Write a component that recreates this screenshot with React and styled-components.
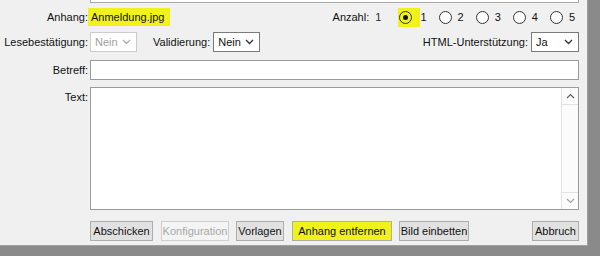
import React from "react";
import styled, { createGlobalStyle } from "styled-components";

const Global = createGlobalStyle`
  html, body { margin: 0; padding: 0; background: #f0f0f0; }
  body { font-family: "Liberation Sans", Arial, sans-serif; font-size: 11px; color: #111; }
`;

const Frame = styled.div`
  width: 600px;
  height: 256px;
  display: grid;
  grid-template-columns: 588px 12px;
  grid-template-rows: 246px 10px;
  background: #8a8a8a;
  overflow: hidden;
`;

const Dialog = styled.div`
  background: #f0f0f0;
  display: flex;
  flex-direction: column;
  padding-right: 8px;
  border-right: 1px solid #a0a0a0;
  border-bottom: 1px solid #a0a0a0;
`;

const TopBox = styled.div`
  margin-left: 90px;
  height: 2px;
  border: 1px solid #a9a9a9;
  border-top: none;
  background: #fff;
`;

const Row = styled.div`
  display: flex;
  align-items: center;
  height: ${(p) => p.h || 20}px;
  margin-top: ${(p) => p.mt || 0}px;
`;

const Label = styled.span`
  width: 88px;
  flex: none;
  text-align: right;
  white-space: nowrap;
  margin-right: 2px;
  align-self: ${(p) => (p.top ? "flex-start" : "center")};
  padding-top: ${(p) => (p.top ? "4px" : "0")};
`;

const InlineLabel = styled.span`
  white-space: nowrap;
  margin-left: ${(p) => p.ml || 0}px;
  margin-right: 3px;
`;

const Highlight = styled.span`
  background: #f1f11c;
  padding: 3px 6px 3px 3px;
  margin-left: -2px;
`;

const RightGroup = styled.div`
  margin-left: auto;
  display: flex;
  align-items: center;
`;

const Count = styled.span`
  margin-left: 6px;
  margin-right: 18px;
  color: #2a2a3a;
`;

const Radios = styled.div`
  display: flex;
  align-items: center;
  gap: 12px;
  margin-right: 4px;
`;

const RadioOption = styled.span`
  display: flex;
  align-items: center;
  gap: ${(p) => (p.checked ? 0 : 6)}px;
`;

const RadioMark = styled.span`
  display: flex;
  align-items: center;
  padding: ${(p) => (p.checked ? "3px 8px 3px 1px" : "0")};
  margin-left: ${(p) => (p.checked ? "-1px" : "0")};
  background: ${(p) => (p.checked ? "#f1f11c" : "transparent")};
`;

const Circle = styled.span`
  width: 11px;
  height: 11px;
  border-radius: 50%;
  border: 1px solid #333;
  background: ${(p) => (p.checked ? "transparent" : "#fff")};
  display: flex;
  align-items: center;
  justify-content: center;
  &::after {
    content: "";
    display: ${(p) => (p.checked ? "block" : "none")};
    width: 5px;
    height: 5px;
    border-radius: 50%;
    background: #111;
  }
`;

const SelectBox = styled.span`
  display: flex;
  align-items: center;
  justify-content: space-between;
  box-sizing: border-box;
  width: ${(p) => p.w}px;
  height: 20px;
  padding: 0 5px 0 4px;
  background: #fff;
  border: 1px solid ${(p) => (p.disabled ? "#cccccc" : "#7a7a7a")};
  color: ${(p) => (p.disabled ? "#a0a0a0" : "#111")};
  margin-left: ${(p) => p.ml || 0}px;
`;

const Chevron = ({ color }) => (
  <svg width="9" height="6" viewBox="0 0 9 6">
    <path d="M1 1 L4.5 4.5 L8 1" fill="none" stroke={color} strokeWidth="1.3" />
  </svg>
);

const Select = ({ value, w, disabled, ml }) => (
  <SelectBox w={w} disabled={disabled} ml={ml}>
    <span>{value}</span>
    <Chevron color={disabled ? "#b0b0b0" : "#333"} />
  </SelectBox>
);

const TextInput = styled.div`
  flex: 1;
  height: 20px;
  box-sizing: border-box;
  background: #fff;
  border: 1px solid #9a9a9a;
`;

const TextArea = styled.div`
  flex: 1;
  align-self: stretch;
  box-sizing: border-box;
  background: #fff;
  border: 1px solid #9a9a9a;
  display: flex;
  justify-content: flex-end;
`;

const ScrollBar = styled.div`
  width: 16px;
  display: flex;
  flex-direction: column;
  justify-content: space-between;
  background: #fbfbfb;
  border-left: 1px solid #e2e2e2;
`;

const ScrollBtn = styled.div`
  height: 16px;
  display: flex;
  align-items: center;
  justify-content: center;
  border-${(p) => (p.up ? "bottom" : "top")}: 1px solid #e2e2e2;
`;

const Buttons = styled.div`
  display: flex;
  align-items: center;
  margin-top: 11px;
  margin-left: 90px;
  height: 20px;
`;

const Button = styled.button`
  box-sizing: border-box;
  height: 20px;
  width: ${(p) => p.w}px;
  margin-left: ${(p) => (p.push ? "auto" : `${p.ml || 0}px`)};
  padding: 0;
  font: inherit;
  font-size: 11px;
  color: ${(p) => (p.disabled ? "#a8a8a8" : "#111")};
  background: ${(p) => (p.hl ? "#f1f11c" : p.disabled ? "#f4f4f4" : "#e1e1e1")};
  border: 1px solid ${(p) => (p.disabled ? "#cfcfcf" : "#adadad")};
  white-space: nowrap;
`;

const RightEdge = styled.div``;
const BottomEdge = styled.div`
  grid-column: 1 / span 2;
`;

export default function App() {
  const radios = [1, 2, 3, 4, 5];
  return (
    <>
      <Global />
      <Frame>
        <Dialog>
          <TopBox />
          <Row h={18} mt={5}>
            <Label>Anhang:</Label>
            <Highlight>Anmeldung.jpg</Highlight>
            <RightGroup>
              <span>Anzahl:</span>
              <Count>1</Count>
              <Radios>
                {radios.map((n) => (
                  <RadioOption key={n} checked={n === 1}>
                    <RadioMark checked={n === 1}>
                      <Circle checked={n === 1} />
                    </RadioMark>
                    <span>{n}</span>
                  </RadioOption>
                ))}
              </Radios>
            </RightGroup>
          </Row>
          <Row h={20} mt={6}>
            <Label>Lesebestätigung:</Label>
            <Select value="Nein" w={47} disabled />
            <InlineLabel ml={16}>Validierung:</InlineLabel>
            <Select value="Nein" w={47} />
            <RightGroup>
              <InlineLabel>HTML-Unterstützung:</InlineLabel>
              <Select value="Ja" w={48} />
            </RightGroup>
          </Row>
          <Row h={20} mt={8}>
            <Label>Betreff:</Label>
            <TextInput />
          </Row>
          <Row h={123} mt={7}>
            <Label top>Text:</Label>
            <TextArea>
              <ScrollBar>
                <ScrollBtn up>
                  <svg width="9" height="6" viewBox="0 0 9 6">
                    <path d="M1 5 L4.5 1.5 L8 5" fill="none" stroke="#606060" strokeWidth="1.2" />
                  </svg>
                </ScrollBtn>
                <ScrollBtn>
                  <svg width="9" height="6" viewBox="0 0 9 6">
                    <path d="M1 1 L4.5 4.5 L8 1" fill="none" stroke="#a0a0a0" strokeWidth="1.2" />
                  </svg>
                </ScrollBtn>
              </ScrollBar>
            </TextArea>
          </Row>
          <Buttons>
            <Button w={63}>Abschicken</Button>
            <Button w={68} ml={8} disabled>Konfiguration</Button>
            <Button w={48} ml={7}>Vorlagen</Button>
            <Button w={100} ml={8} hl>Anhang entfernen</Button>
            <Button w={70} ml={7}>Bild einbetten</Button>
            <Button w={47} push>Abbruch</Button>
          </Buttons>
        </Dialog>
        <RightEdge />
        <BottomEdge />
      </Frame>
    </>
  );
}
